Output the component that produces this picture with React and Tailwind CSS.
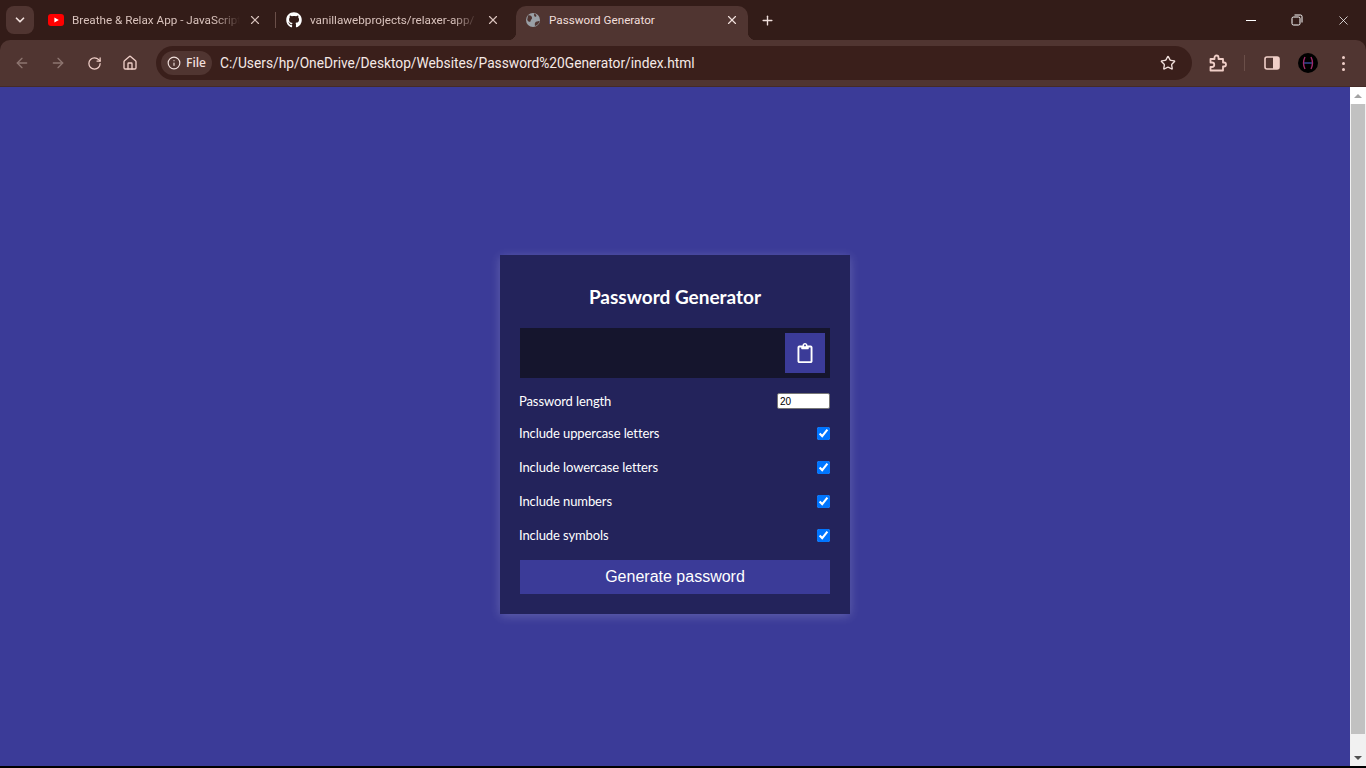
import React from 'react';
import { FaGithub, FaRegClipboard } from 'react-icons/fa';
import { ChevronDown, X, Plus, ArrowLeft, ArrowRight, RotateCw, Home, Info, Star } from 'lucide-react';

const YoutubeIcon = () => (
  <svg width="16" height="12" viewBox="0 0 16 12" className="shrink-0">
    <rect width="16" height="12" rx="3" fill="#ff0000" />
    <path d="M6.4 3.4 L10.8 6 L6.4 8.6 Z" fill="#fff" />
  </svg>
);

const GlobeIcon = () => (
  <svg width="16" height="16" viewBox="0 0 16 16" className="shrink-0">
    <circle cx="8" cy="8" r="7" fill="#9aa0a6" />
    <path d="M3 3.5 C5 3 6.5 4 7 5.5 C7.4 7 5.8 7.5 5.6 9 C5.4 10.5 3.5 10 2.2 8 Z M10 14 C9.6 12 9.8 10.5 11 9.8 C12.4 9.2 13.8 9 14.6 9 C14 11.6 12.4 13.4 10 14 Z M9 1.6 C10.6 2 11.6 3 11.4 4 C11 5.2 9.6 5 9.2 4 Z" fill="#503531" />
  </svg>
);

const PuzzleIcon = () => (
  <svg width="19" height="19" viewBox="0 0 19 19" fill="none" stroke="#f0cfc8" strokeWidth="1.8" strokeLinejoin="round" className="ml-[16px]">
    <path d="M2.5 5 H6.5 V3.5 a2 2 0 0 1 4 0 V5 H15 V8.5 H16 a2 2 0 0 1 0 4 H15 V16.5 H2.5 V13 H4 a2.2 2.2 0 0 0 0-4.5 H2.5 Z" />
  </svg>
);

const Tab = ({ icon, title, width, active, closeColor }) => (
  <div className={`relative flex items-center h-[34px] pl-[9px] pr-[9px] pb-[6px] shrink-0 ${width} ${active ? 'bg-[#503531] rounded-t-[10px]' : ''}`}>
    {active && (
      <>
        <span className="absolute left-[-8px] bottom-0 w-2 h-2 bg-[radial-gradient(circle_at_0_0,transparent_8px,#503531_8.5px)]" />
        <span className="absolute right-[-8px] bottom-0 w-2 h-2 bg-[radial-gradient(circle_at_100%_0,transparent_8px,#503531_8.5px)]" />
      </>
    )}
    {icon}
    <span className={`ml-2 pt-px flex-1 overflow-hidden whitespace-nowrap text-[11.7px] [font-family:Roboto,sans-serif] ${active ? 'text-[#f0dfdb] -ml-0 pl-0' : 'text-[#d9c2bc] [mask-image:linear-gradient(to_right,black_85%,transparent)]'}`}>
      {title}
    </span>
    <X size={14} strokeWidth={2} className={`ml-2 shrink-0 ${closeColor}`} />
  </div>
);

const ChromeBar = () => (
  <div className="shrink-0 bg-[#331c18]">
    <div className="h-10 flex items-end">
      <div className="w-[39px] h-10 flex items-center pl-[6px]">
        <div className="w-7 h-7 rounded-lg bg-[#503531] flex items-center justify-center">
          <ChevronDown size={14} strokeWidth={3} className="text-[#f0dfdb]" />
        </div>
      </div>
      <Tab icon={<YoutubeIcon />} title="Breathe & Relax App - JavaScript" width="w-[232px]" closeColor="text-[#d9c2bc]" />
      <div className="w-px h-4 bg-[#6b4f49] mb-3 ml-1" />
      <Tab icon={<FaGithub size={16} className="text-white shrink-0" />} title="vanillawebprojects/relaxer-app/" width="w-[232px] ml-px" closeColor="text-[#d9c2bc]" />
      <Tab icon={<GlobeIcon />} title="Password Generator" width="w-[232px] ml-[7px]" active closeColor="text-[#f0dfdb]" />
      <div className="h-10 flex items-center ml-3">
        <Plus size={15} strokeWidth={2.2} className="text-[#f0dfdb]" />
      </div>
      <div className="flex-1" />
      <div className="h-10 flex items-center text-white">
        <div className="w-[46px] flex justify-center"><div className="w-[10px] h-px bg-white" /></div>
        <div className="w-[46px] flex justify-center">
          <svg width="12" height="12" viewBox="0 0 12 12" fill="none" stroke="white" strokeWidth="1">
            <rect x="1" y="3" width="8" height="8" rx="1.5" />
            <path d="M3.5 1 H9.5 Q11 1 11 2.5 V8.5" />
          </svg>
        </div>
        <div className="w-[46px] flex justify-center"><X size={15} strokeWidth={1.2} /></div>
      </div>
    </div>
    <div className="h-[47px] bg-[#503531] rounded-t-[10px] flex items-center border-b border-[#452b27]">
      <div className="flex items-center w-[156px] h-full pl-[14px] gap-[20px] text-[#8d7570]">
        <ArrowLeft size={16} strokeWidth={2} />
        <ArrowRight size={16} strokeWidth={2} />
        <RotateCw size={15} strokeWidth={2} className="text-[#f0cfc8] ml-[1px]" />
        <Home size={16} strokeWidth={2} className="text-[#f0cfc8]" />
      </div>
      <div className="w-[1036px] h-[34px] rounded-full bg-[#3a1f1b] flex items-center pl-[5px] pr-[16px]">
        <div className="h-[24px] w-[51px] rounded-full bg-[#503531] flex items-center justify-center gap-[5px] text-[#f0dfdb]">
          <Info size={14} strokeWidth={2} className="shrink-0" />
          <span className="text-[12px] font-semibold [font-family:'Open_Sans',sans-serif]">File</span>
        </div>
        <span className="ml-[8px] text-[#f5e9e6] text-[13.75px] whitespace-nowrap [font-family:Roboto,sans-serif]">
          C:/Users/hp/OneDrive/Desktop/Websites/Password%20Generator/index.html
        </span>
        <div className="flex-1" />
        <Star size={16} strokeWidth={2} className="text-[#f0dfdb]" />
      </div>
      <div className="flex items-center flex-1">
        <PuzzleIcon />
        <div className="w-px h-4 bg-[#6b4f49] ml-[17px]" />
        <svg width="16" height="14" viewBox="0 0 16 14" className="ml-[19px]">
          <rect x="1" y="1" width="14" height="12" rx="2" fill="none" stroke="#f0cfc8" strokeWidth="1.6" />
          <rect x="9" y="1" width="6" height="12" fill="#f0cfc8" />
        </svg>
        <svg width="20" height="20" viewBox="0 0 20 20" className="ml-[18px]">
          <circle cx="10" cy="10" r="10" fill="#000" />
          <path d="M7 4 C5 8 5 12 7 16 M13 4 C15 8 15 12 13 16" stroke="#a02a6a" strokeWidth="1.4" fill="none" />
          <path d="M6 10 H14" stroke="#3a4aa0" strokeWidth="1.4" />
        </svg>
        <div className="ml-[24px] flex flex-col gap-[3px]">
          <span className="w-[3px] h-[3px] rounded-full bg-[#f0cfc8]" />
          <span className="w-[3px] h-[3px] rounded-full bg-[#f0cfc8]" />
          <span className="w-[3px] h-[3px] rounded-full bg-[#f0cfc8]" />
        </div>
      </div>
    </div>
  </div>
);

const Scrollbar = () => (
  <div className="w-4 bg-[#f1f1f1] flex flex-col items-center shrink-0">
    <div className="h-[17px] w-full flex items-center justify-center bg-white">
      <div className="w-0 h-0 border-x-[4px] border-x-transparent border-b-[4px] border-b-[#a3a3a3]" />
    </div>
    <div className="w-[14px] flex-1 bg-[#c1c1c1] mb-[15px]" />
    <div className="h-[17px] w-full flex items-center justify-center">
      <div className="w-0 h-0 border-x-[4px] border-x-transparent border-t-[4px] border-t-[#505050]" />
    </div>
  </div>
);

const options = ['Include uppercase letters', 'Include lowercase letters', 'Include numbers', 'Include symbols'];

const Card = () => (
  <div className="w-[350px] bg-[#23235b] p-5 shadow-[0_2px_10px_rgba(255,255,255,0.2)] text-white [font-family:Lato,sans-serif]">
    <h2 className="h-[45px] mb-[8px] flex items-center justify-center text-[19px] font-bold">Password Generator</h2>
    <div className="h-[50px] bg-[#15152d] flex items-center justify-end pr-[5px]">
      <button className="w-10 h-10 bg-[#3b3b98] flex items-center justify-center">
        <FaRegClipboard size={20} className="text-white" />
      </button>
    </div>
    <div className="mt-2 h-[30px] flex items-center justify-between text-[13px] tracking-[-0.1px]">
      <label className="-ml-px pt-[2px]">Password length</label>
      <input
        type="text"
        readOnly
        value="20"
        className="w-[53px] h-4 bg-white border border-[#767676] rounded-[2px] px-[2px] text-black text-[10px] [font-family:'Liberation_Sans',sans-serif]"
      />
    </div>
    {options.map((option) => (
      <div key={option} className="h-[34px] flex items-center justify-between text-[13px] tracking-[-0.1px]">
        <label className="-ml-px pt-[2px]">{option}</label>
        <input type="checkbox" readOnly checked className="w-[13px] h-[13px] mt-px" />
      </div>
    ))}
    <button className="mt-2 w-full h-[34px] bg-[#3b3b98] text-white text-[16px] [font-family:'Liberation_Sans',sans-serif]">
      Generate password
    </button>
  </div>
);

export default function App() {
  return (
    <div className="h-[768px] flex flex-col overflow-hidden border-b-2 border-black bg-[#3b3b98]">
      <ChromeBar />
      <div className="flex-1 flex min-h-0">
        <div className="flex-1 flex items-center justify-center pt-4">
          <Card />
        </div>
        <Scrollbar />
      </div>
    </div>
  );
}
